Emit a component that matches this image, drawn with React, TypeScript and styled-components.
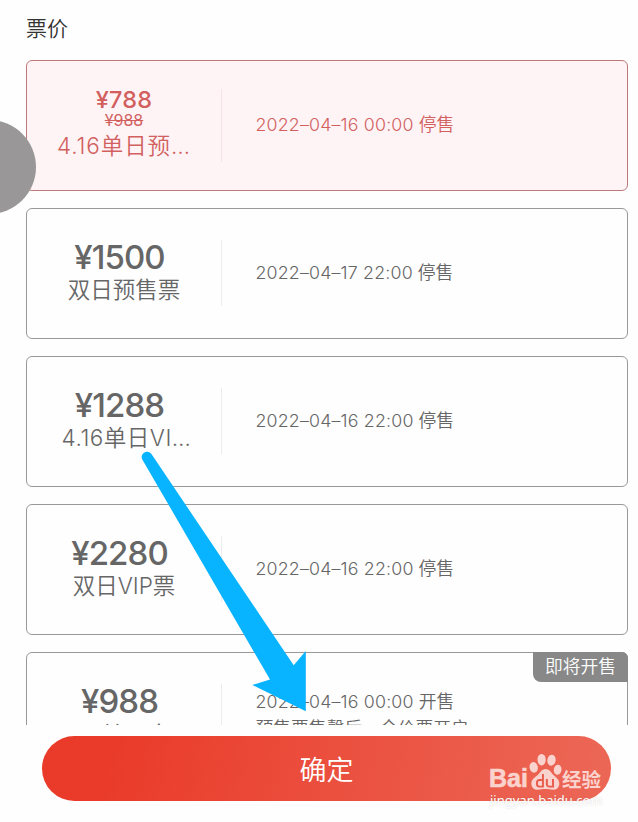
import React from "react";
import styled, { createGlobalStyle } from "styled-components";

const GlobalStyle = createGlobalStyle`
  * { box-sizing: border-box; }
  html, body { margin: 0; padding: 0; background: #fefefe; }
  body { font-family: Inter, "Noto Sans CJK SC", sans-serif; }
`;

const Page = styled.main`
  position: relative;
  display: flex;
  flex-direction: column;
  width: 638px;
  height: 822px;
  overflow: hidden;
  background: #fefefe;
`;

const Title = styled.h1`
  flex: none;
  height: 60px;
  margin: 0;
  padding-left: 26px;
  font-size: 21px;
  font-weight: 350;
  line-height: 58px;
  color: #333;
`;

const TicketList = styled.div`
  flex: none;
  display: flex;
  flex-direction: column;
  gap: 17px;
  height: 665px;
  padding: 0 10px 0 26px;
  overflow: hidden;
`;

const Card = styled.section<{ $selected?: boolean }>`
  position: relative;
  flex: none;
  display: flex;
  align-items: center;
  height: 131px;
  padding-bottom: ${(p) => (p.$selected ? 0 : 2)}px;
  border: 1px solid ${(p) => (p.$selected ? "#c0797a" : "#999")};
  border-radius: 6px;
  background: ${(p) => (p.$selected ? "#fef4f5" : "#fefefe")};
  color: ${(p) => (p.$selected ? "#d2605f" : "#666")};
`;

const Offer = styled.div<{ $selected?: boolean }>`
  flex: none;
  width: 195px;
  border-right: 1px solid ${(p) => (p.$selected ? "#f6e3e4" : "#ececec")};
  text-align: center;
  white-space: nowrap;
`;

const Price = styled.div<{ $small?: boolean }>`
  height: ${(p) => (p.$small ? 21 : 34)}px;
  padding-right: ${(p) => (p.$small ? 0 : 9)}px;
  font-size: ${(p) => (p.$small ? 23.5 : 33)}px;
  line-height: ${(p) => (p.$small ? 21 : 35)}px;
  font-weight: ${(p) => (p.$small ? 500 : 550)};
  letter-spacing: ${(p) => (p.$small ? 0.2 : -0.9)}px;
`;

const OldPrice = styled.div`
  height: 20px;
  font-size: 16px;
  line-height: 21px;
  text-decoration: line-through;
`;

const Label = styled.div<{ $shift?: number; $lowered?: boolean }>`
  height: 32px;
  padding-left: ${(p) => p.$shift ?? 0}px;
  font-size: 22.5px;
  line-height: ${(p) => (p.$lowered ? 34 : 32)}px;
  font-weight: 350;
`;

const LabelPart = styled.span<{ $tracking: number }>`
  letter-spacing: ${(p) => p.$tracking}px;
`;

const Details = styled.div<{ $lift: number }>`
  padding-left: 33.5px;
  padding-bottom: ${(p) => p.$lift}px;
  font-size: 17.8px;
  line-height: 27px;
  font-weight: 350;
  white-space: nowrap;
`;

const Numbers = styled.span`
  letter-spacing: 0.18px;
`;

const Tag = styled.div`
  position: absolute;
  top: -1px;
  right: -1px;
  width: 95px;
  height: 30px;
  border-radius: 0 6px 0 8px;
  background: #888;
  color: #fff;
  font-size: 17.8px;
  font-weight: 350;
  line-height: 30px;
  text-align: center;
`;

const Footer = styled.footer`
  flex: none;
  padding: 11px 27px 0 42px;
`;

const Confirm = styled.button`
  display: block;
  width: 100%;
  height: 65px;
  padding: 0;
  border: 0;
  border-radius: 33px;
  background: linear-gradient(100deg, #ea3b2a 12%, #ec6655 96%);
  color: #fff;
  font: 350 27px/65px "Noto Sans CJK SC", sans-serif;
`;

const FloatingHandle = styled.div`
  position: absolute;
  top: 120px;
  left: -58px;
  width: 94px;
  height: 94px;
  border-radius: 50%;
  background: #999797;
`;

const Arrow = styled.svg`
  position: absolute;
  top: 445px;
  left: 135px;
`;

const Watermark = styled.div`
  position: absolute;
  top: 751px;
  left: 489px;
  width: 120px;
  color: #fbd3ce;
`;

const Brand = styled.div`
  display: flex;
  align-items: flex-end;
  height: 39px;
`;

const BrandLatin = styled.span`
  width: 39px;
  margin-bottom: -2px;
  font: 700 25px/28px "Liberation Sans", sans-serif;
  -webkit-text-stroke: 0.6px currentColor;
`;

const BrandChinese = styled.span`
  margin-bottom: -2px;
  font: 700 19.5px/26px "Noto Sans CJK SC", sans-serif;
`;

const SiteAddress = styled.div`
  margin-top: 2px;
  padding-left: 1px;
  font: 400 13px/16px "Noto Sans", sans-serif;
  color: #fff;
  text-shadow: 0 0 2px rgba(120, 100, 100, 0.3);
`;

type Ticket = {
  price: string;
  oldPrice?: string;
  label: string;
  tracking?: number;
  shift?: number;
  lift?: number;
  date: string;
  status: string;
  note?: string;
  tag?: string;
  selected?: boolean;
};

const tickets: Ticket[] = [
  { price: "¥788", oldPrice: "¥988", label: "4.16单日预…", tracking: 0.9, lift: 2, date: "2022–04–16 00:00", status: "停售", selected: true },
  { price: "¥1500", label: "双日预售票", date: "2022–04–17 22:00", status: "停售" },
  { price: "¥1288", label: "4.16单日VI…", tracking: 0.5, shift: 5, date: "2022–04–16 22:00", status: "停售" },
  { price: "¥2280", label: "双日VIP票", date: "2022–04–16 22:00", status: "停售" },
  { price: "¥988", label: "4.16单日全…", tracking: 0.9, lift: 4, date: "2022–04–16 00:00", status: "开售", note: "预售票售罄后，全价票开启", tag: "即将开售" },
];

function Paw() {
  return (
    <svg width="34" height="37" viewBox="0 0 32 36" fill="currentColor">
      <ellipse cx="5" cy="14" rx="4" ry="5.2" transform="rotate(-12 5 14)" />
      <ellipse cx="12.7" cy="6.5" rx="4" ry="5.6" />
      <ellipse cx="22.3" cy="7" rx="4" ry="5.4" transform="rotate(10 22.3 7)" />
      <ellipse cx="28.3" cy="16.3" rx="3.7" ry="5" transform="rotate(8 28.3 16.3)" />
      <path d="M16.6 15.5c-3.9 0-5.3 3.8-8.2 6.3-2.8 2.3-5.7 4-5.7 8 0 3.7 2.7 5.9 6.2 5.9 2.8 0 4.5-.7 7.5-.7s4.5.7 7.2.7c3.7 0 6.3-2.2 6.3-5.9 0-4.2-2.8-5.7-5.2-8-2.7-2.5-4.2-6.3-8.1-6.3z" />
      <g fill="none" stroke="#e95c4d" strokeWidth="1.9">
        <path d="M14 20.5v12.2h-3.3a2.5 2.5 0 0 1-2.5-2.5v-1.5a2.5 2.5 0 0 1 2.5-2.5H14" />
        <path d="M17.8 25.4v4.9a2.4 2.4 0 0 0 2.4 2.4h3.6v-7.3" />
      </g>
    </svg>
  );
}

export default function App() {
  return (
    <>
      <GlobalStyle />
      <Page>
        <Title>票价</Title>
        <TicketList>
          {tickets.map((t) => (
            <Card key={t.price} $selected={t.selected}>
              <Offer $selected={t.selected}>
                <Price $small={!!t.oldPrice}>{t.price}</Price>
                {t.oldPrice && <OldPrice>{t.oldPrice}</OldPrice>}
                <Label $shift={t.shift} $lowered={!!t.note}>
                  <LabelPart $tracking={t.tracking ?? 0}>{t.label}</LabelPart>
                </Label>
              </Offer>
              <Details $lift={t.lift ?? 0}>
                <div>
                  <Numbers>{t.date}</Numbers> {t.status}
                </div>
                {t.note && <div>{t.note}</div>}
              </Details>
              {t.tag && <Tag>{t.tag}</Tag>}
            </Card>
          ))}
        </TicketList>
        <Footer>
          <Confirm>确定</Confirm>
        </Footer>
        <FloatingHandle />
        <Arrow width="180" height="275" viewBox="135 445 180 275">
          <path
            d="M142.3 459.5C140.8 456.5 142 453.5 145 452.2C147.5 451.2 150.2 451.8 151.8 454.5L293.7 665.3L305.8 651V711.3L252.3 685L270 679.5Z"
            fill="#08b3ff"
          />
        </Arrow>
        <Watermark>
          <Brand>
            <BrandLatin>Bai</BrandLatin>
            <Paw />
            <BrandChinese>经验</BrandChinese>
          </Brand>
          <SiteAddress>jingyan.baidu.com</SiteAddress>
        </Watermark>
      </Page>
    </>
  );
}
